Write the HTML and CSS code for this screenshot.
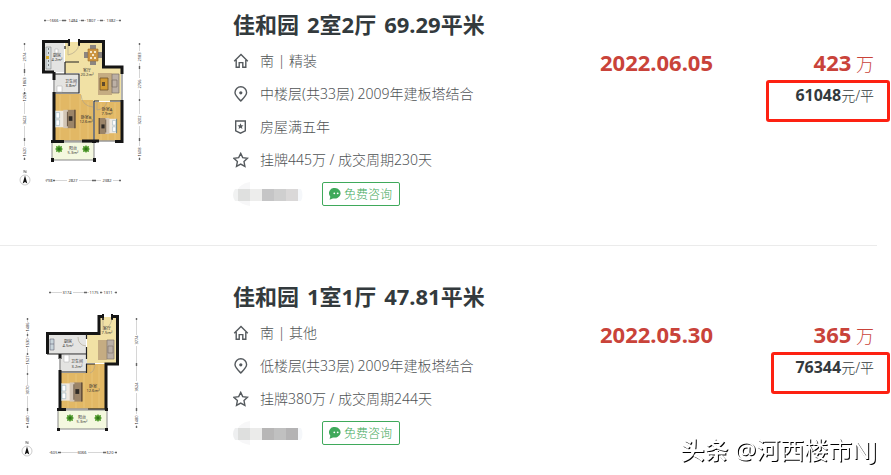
FILE: index.html
```
<!DOCTYPE html>
<html lang="zh-CN">
<head>
  <meta charset="UTF-8" />
  <meta name="viewport" content="width=device-width, initial-scale=1.0"/>
  <title>佳和园 成交</title>
  <link rel="stylesheet" href="styles.css">
</head>
<body>
  <!-- shared icons -->
  <svg class="defs" width="0" height="0" aria-hidden="true">
    <symbol id="house" viewBox="0 0 16 16">
      <path d="M1.200 8.200 8 1.600l6.800 6.600M3.200 7v7.300h3V9.600h3.600v4.700h3V7"/>
    </symbol>
    <symbol id="pin" viewBox="0 0 16 16">
      <path d="M7.800 15C4.500 11.800 2 9.600 2 6.600a5.800 5.800 0 0 1 11.600 0C13.600 9.600 11.100 11.800 7.800 15Z"/>
      <circle class="solid" cx="7.800" cy="6.800" r="1.600"/>
    </symbol>
    <symbol id="badge" viewBox="0 0 16 16">
      <path d="M2.700 2h9.600v9.800l-4.800 2.400-4.800-2.400Z"/>
      <path class="solid" d="m7.500 4.200.9 2 2.100.2-1.600 1.400.5 2.200-1.900-1.200-1.900 1.200.5-2.200-1.600-1.400 2.100-.2Z"/>
    </symbol>
    <symbol id="star" viewBox="0 0 16 16">
      <path d="m7.700 1.400 2 4.200 4.800.7-3.500 3.300.9 4.800-4.200-2.300-4.200 2.300.9-4.800L.9 6.300l4.800-.7Z"/>
    </symbol>
    <symbol id="chat" viewBox="0 0 12 12">
      <path d="M6 0a6 5.300 0 1 1-2 10.400L.6 11.800l.7-3.100A5.300 5.300 0 0 1 6 0Z" fill="#3fa95b"/>
      <circle cx="5.300" cy="5.300" r=".9" fill="#fff"/>
      <circle cx="8.700" cy="5.300" r=".9" fill="#fff"/>
    </symbol>
    <symbol id="compass" viewBox="0 0 12 18">
      <circle cx="6" cy="12" r="5" fill="#fff" stroke="#aaa" stroke-width=".6"/>
      <path d="m6 7.500 2.300 8L6 14l-2.300 1.500Z" fill="#111"/>
      <path d="M5 4.800V2.300l2 2.500V2.300" fill="none" stroke="#444" stroke-width=".6"/>
    </symbol>
    <symbol id="plant" viewBox="0 0 8 8">
      <path d="m4 0 1 1.400L7 1l-.3 2L8 4 6.700 5 7 7l-2-.4L4 8 3 6.600 1 7l.3-2L0 4l1.300-1L1 1l2 .4Z" fill="#4f9a2c"/>
      <circle cx="4" cy="4" r="1.500" fill="#2f7418"/>
    </symbol>
    <symbol id="bed" viewBox="0 0 24 20">
      <path d="M0 1h14v18H0Z" fill="#efeae2"/>
      <path d="M13 0h9v20h-9Z" fill="#9b8468"/>
      <path d="M9 0h5v20H9Z" fill="#d3c6b6"/>
      <path d="M13 2h1v16h-1ZM21 0h1.500v20H21Z" fill="#5f4b38"/>
      <path d="M15 7h4v5h-4Z" fill="#2f2a25"/>
      <path d="M1 3h4v6H1ZM1 11h4v6H1Z" fill="#fff" stroke="#9bb2bd" stroke-width=".7"/>
      <path d="M0 1v18" stroke="#4c7484"/>
    </symbol>
  </svg>

  <ul class="list">
    <li class="card">
      <svg class="plan" viewBox="0 10 160 180" role="img" aria-label="户型图">
        <!-- rooms -->
        <path fill="#f1e1a5" d="M65 42h38v26h18v33H80V73H65Z"/>
        <path fill="#e4e4e2" d="M45 43h19v29H45ZM55 74h23v19H55Z"/>
        <path fill="#e2b865" d="M54 94h27v6h12v41H54ZM95 102h26v39H95Z"/>
        <path fill="#f4f8df" stroke="#888" d="M52 142h42v18H52Z"/>
        <path stroke="#eed08a" stroke-width=".5" d="M60 95v45M70 95v45M80 95v45M88 102v38M101 103v38M108 103v38M115 103v38"/>
        <!-- walls -->
        <path class="wall" d="M69 41.500H43.500V72H54M78 41.500h25.500V67H122v7M122 100v41.500h-7M54 72v8M54 92v49.500h10M82 141h17"/>
        <path class="wall-ends" d="M68 39h2v7h-2ZM78 39h2v7h-2ZM51 140h4v3h-4ZM92 140h4v3h-4ZM51 158h3v4h-3ZM93 158h3v4h-3Z"/>
        <path class="thin-wall" d="M54 74h25v19H54M65 46v3M65 62h14M65 62v12M94 101v40M94 101h5M110 101h12"/>
        <path class="window" d="M54 80v12M122 74v26M64 141h18M99 141h16"/>
        <!-- furniture -->
        <path class="door" d="M68 43v12q9-2 11-10M81 95q1 11 12 12M97 102v8q8-1 10-8"/>
        <path fill="#d5dde0" stroke="#777" stroke-width=".5" d="M46 47h5v22h-5Z"/>
        <path stroke="#555" stroke-width=".7" stroke-dasharray="2 2" d="M48.500 48v20"/>
        <path fill="#d8ad32" d="M46 56h3v3h-3Z"/>
        <path fill="#fff" stroke="#aaa" stroke-width=".5" d="M57 86h5v6h-5ZM55 49h3v4h-3Z"/>
        <path fill="#8b8580" d="M90 45h6v4h-6ZM90 61h6v4h-6ZM84 52h4v6h-4ZM98 52h4v6h-4Z"/>
        <path fill="#cd9643" stroke="#9f6b26" stroke-width=".6" d="M88 49h10v12H88Z"/>
        <path fill="#f4e7c9" d="M90 51h2v2h-2ZM94 51h2v2h-2ZM90 57h2v2h-2ZM94 57h2v2h-2ZM92 54h2v2h-2Z"/>
        <path fill="#c5ac82" d="M98 73h14v22H98Z"/>
        <path fill="#d29b33" stroke="#6e532e" stroke-width=".8" d="M100 78h8v12h-8Z"/>
        <path fill="#5f4a2c" d="M102 82h3v4h-3Z"/>
        <path fill="#bcb0a5" stroke="#7d7065" stroke-width=".7" d="M112 74h7v19h-7ZM112 80h5v7h-5Z"/>
        <use href="#bed" x="55" y="109" width="22" height="20"/>
        <use href="#bed" x="95" y="118" width="24" height="16" transform="rotate(180 107 126)"/>
        <use href="#plant" x="55" y="145" width="8" height="8"/>
        <use href="#plant" x="82" y="145" width="8" height="8"/>
        <g class="room">
          <text x="57" y="57">厨房</text><text x="57" y="61">4.2m²</text>
          <text x="87" y="72">客厅</text><text x="87" y="76">20.2m²</text>
          <text x="71" y="83">卫生间</text><text x="71" y="87">3.8m²</text>
          <text x="86" y="119">卧室B</text><text x="86" y="123">12.6m²</text>
          <text x="107" y="111">卧室A</text><text x="107" y="115">7.9m²</text>
          <text x="73" y="150">阳台</text><text x="73" y="154">5.3m²</text>
        </g>
        <!-- measures -->
        <path class="measure" d="M45 20.500h5M59 20.500h8M79 20.500h7M97 20.500h8M116 20.500h5M45 180.500h2M53 180.500h14M79 180.500h22M113 180.500h8M24.500 43v8M24.500 63v13M24.500 88v3M24.500 102v12M24.500 126v20M24.500 157v3M139.500 43v8M139.500 63v15M139.500 90v24M139.500 126v20M139.500 157v3"/>
        <path class="tick" d="M44 20.500h2M62 20.500h4M81 20.500h3M100 20.500h3M119 20.500h2M53 180.500h2M92 180.500h4M119 180.500h2M24.500 43v2M24.500 69v4M24.500 92v2M24.500 138v3M24.500 158v2M139.500 43v2M139.500 66v3M139.500 99v2M139.500 138v3M139.500 158v2"/>
        <g class="size">
          <text x="54" y="22">1666</text><text x="73" y="22">1484</text><text x="91" y="22">1807</text><text x="111" y="22">1382</text>
          <text x="49" y="182">798</text><text x="73" y="182">2827</text><text x="107" y="182">2382</text>
          <text transform="translate(26 57) rotate(-90)">2174</text><text transform="translate(26 82) rotate(-90)">1863</text>
          <text transform="translate(26 97) rotate(-90)">1255</text><text transform="translate(26 120) rotate(-90)">3422</text>
          <text transform="translate(26 152) rotate(-90)">1620</text>
          <text transform="translate(141 57) rotate(-90)">2183</text><text transform="translate(141 84) rotate(-90)">2756</text>
          <text transform="translate(141 120) rotate(-90)">3202</text><text transform="translate(141 152) rotate(-90)">1608</text>
        </g>
        <use href="#compass" x="19" y="168" width="12" height="18"/>
      </svg>
      <div class="info">
        <h2 class="title"><a href="#"><span>佳和园</span><span>2室2厅</span><span>69.29平米</span></a></h2>
        <p class="row"><svg class="icon"><use href="#house"/></svg>南 | 精装</p>
        <p class="row"><svg class="icon"><use href="#pin"/></svg>中楼层(共33层) 2009年建板塔结合</p>
        <p class="row"><svg class="icon"><use href="#badge"/></svg>房屋满五年</p>
        <p class="row"><svg class="icon"><use href="#star"/></svg>挂牌445万 / 成交周期230天</p>
        <div class="agent">
          <svg class="mosaic" viewBox="0 0 70 24" aria-hidden="true">
            <path fill="#f7f7f8" d="M5 7C8 3 11 1 17 0v24C11 23 8 21 5 19Z"/>
            <path fill="#f1f2f2" d="M5 7v12H2q-4-6 0-12Z"/>
            <path fill="#dfe0df" d="M5 7h12v12H5Z"/>
            <path fill="#ededec" d="M17 7h12v12H17Z"/>
            <path fill="#c5c5c6" d="M29 7h12v12H29Z"/>
            <path fill="#cfcfcf" d="M41 7h12v12H41Z"/>
            <path fill="#dad8d8" d="M53 7h12v12H53Z"/>
            <path fill="#f5f7fa" d="M65 7h3q3 6 0 12h-3Z"/>
          </svg>
          <button class="consult" type="button"><svg class="chat"><use href="#chat"/></svg>免费咨询</button>
        </div>
      </div>
      <div class="deal">
        <div class="date">2022.06.05</div>
        <div class="price">
          <div class="total"><b>423</b> 万</div>
          <div class="unit"><b>61048</b>元/平<span class="mark mark-wide"></span></div>
        </div>
      </div>
    </li>

    <li class="card">
      <svg class="plan" viewBox="0 10 160 180" role="img" aria-label="户型图">
        <!-- rooms -->
        <path fill="#f1e1a5" d="M100 45h17v46H87V63h13Z"/>
        <path fill="#e4e4e2" d="M49 63h37v19H49ZM60 83h27v17H60Z"/>
        <path fill="#e2b865" d="M61 101h26v-9h19v45H61Z"/>
        <path fill="#f4f8df" stroke="#888" d="M58 138h49v19H58Z"/>
        <path stroke="#eed08a" stroke-width=".5" d="M68 102v34M76 102v34M84 102v34M92 93v43M99 93v43"/>
        <!-- walls -->
        <path class="wall" d="M103 44.500h-4v17H47.500V82M112 44.500h5.500V92H106v45.500M60 82v5M60 98v39.500h6"/>
        <path class="wall-ends" d="M102 42h2v6h-2ZM111 42h2v6h-2ZM57 136h4v3h-4ZM105 136h3v3h-3ZM57 156h3v3h-3ZM105 156h3v3h-3Z"/>
        <path class="thin-wall" d="M47 82h40M60 100h27M86.500 62v5M86.500 75v12M86.500 92v9M86 92h9"/>
        <path class="window" d="M60 86v12M66 137h22"/>
        <path class="thin-wall" d="M88 137h18"/>
        <!-- furniture -->
        <path class="door" d="M103 46v12q7-2 9-11M78 65q0 8 8 9M90 101q4-1 5-8"/>
        <path fill="#c8d4da" stroke="#667" stroke-width=".6" d="M50 67h4v11h-4ZM50 72h4"/>
        <path fill="#fff" stroke="#aaa" stroke-width=".5" d="M64 83h5v7h-5Z"/>
        <path fill="#c5ac82" d="M98 68h9v20h-9Z"/>
        <path fill="#b8aea6" stroke="#82766d" stroke-width=".7" d="M107 68h7v19h-7ZM108 74h5v7h-5Z"/>
        <use href="#bed" x="61" y="110" width="23" height="20"/>
        <use href="#plant" x="66" y="142" width="8" height="8"/>
        <use href="#plant" x="94" y="142" width="8" height="8"/>
        <g class="room">
          <text x="107" y="58">客厅</text><text x="107" y="62">7.5m²</text>
          <text x="68" y="71">厨房</text><text x="68" y="75">4.5m²</text>
          <text x="77" y="91">卫生间</text><text x="77" y="96">3.2m²</text>
          <text x="93" y="116">卧室</text><text x="93" y="120">12.6m²</text>
          <text x="82" y="147">阳台</text><text x="82" y="151">5.3m²</text>
        </g>
        <!-- measures -->
        <path class="measure" d="M49 20.500h13M73 20.500h16M100 20.500h3M114 20.500h3M49 180.500h2M58 180.500h20M88 180.500h17M114 180.500h3M27.500 46v4M27.500 60v6M27.500 76v6M27.500 93v20M27.500 124v18M27.500 153v3M136.500 46v17M136.500 74v35M136.500 121v21M136.500 153v3"/>
        <path class="tick" d="M49 20.500h2M84 20.500h3M100 20.500h2M115 20.500h2M58 180.500h3M103 180.500h3M115 180.500h2M27.500 46v2M27.500 62v2M27.500 81v2M27.500 101v2M27.500 136v3M27.500 154v2M136.500 46v2M136.500 91v3M136.500 136v3M136.500 154v2"/>
        <g class="size">
          <text x="67" y="22">3174</text><text x="94" y="22">1175</text><text x="108" y="22">1311</text>
          <text x="54" y="182">605</text><text x="82" y="182">3066</text><text x="110" y="182">620</text>
          <text transform="translate(29 55) rotate(-90)">1486</text><text transform="translate(29 71) rotate(-90)">1530</text>
          <text transform="translate(29 88) rotate(-90)">1527</text><text transform="translate(29 118) rotate(-90)">3070</text>
          <text transform="translate(29 148) rotate(-90)">1480</text>
          <text transform="translate(138 68) rotate(-90)">3774</text><text transform="translate(138 115) rotate(-90)">3524</text>
          <text transform="translate(138 148) rotate(-90)">1480</text>
        </g>
        <use href="#compass" x="21" y="167" width="12" height="18"/>
      </svg>
      <div class="info">
        <h2 class="title"><a href="#"><span>佳和园</span><span>1室1厅</span><span>47.81平米</span></a></h2>
        <p class="row"><svg class="icon"><use href="#house"/></svg>南 | 其他</p>
        <p class="row"><svg class="icon"><use href="#pin"/></svg>低楼层(共33层) 2009年建板塔结合</p>
        <p class="row"><svg class="icon"><use href="#star"/></svg>挂牌380万 / 成交周期244天</p>
        <div class="agent">
          <svg class="mosaic" viewBox="0 0 70 24" aria-hidden="true">
            <path fill="#f7f7f8" d="M5 7C8 3 11 1 17 0v24C11 23 8 21 5 19Z"/>
            <path fill="#eeeff0" d="M5 7v12H2q-4-6 0-12Z"/>
            <path fill="#dedfde" d="M5 7h12v12H5Z"/>
            <path fill="#ebebea" d="M17 7h12v12H17Z"/>
            <path fill="#b7b6b6" d="M29 7h12v12H29Z"/>
            <path fill="#c0c0c0" d="M41 7h12v12H41Z"/>
            <path fill="#b4b3b4" d="M53 7h12v12H53Z"/>
            <path fill="#f5f7fa" d="M65 7h3q3 6 0 12h-3Z"/>
          </svg>
          <button class="consult" type="button"><svg class="chat"><use href="#chat"/></svg>免费咨询</button>
        </div>
      </div>
      <div class="deal">
        <div class="date">2022.05.30</div>
        <div class="price">
          <div class="total"><b>365</b> 万</div>
          <div class="unit"><b>76344</b>元/平<span class="mark"></span></div>
        </div>
      </div>
    </li>
  </ul>

  <div class="watermark"><b>头条</b> @河西楼市NJ</div>
</body>
</html>
```
FILE: styles.css
```
* {
  box-sizing: border-box;
}
body {
  margin: 0;
  background: #fff;
  color: #4f5355;
  font-family: "Noto Sans", "Noto Sans CJK SC", sans-serif;
  font-size: 14px;
  font-weight: 300;
}
.defs {
  position: absolute;
}
.list {
  list-style: none;
  margin: 0;
  padding: 0 14px 0 0;
}
.card {
  display: flex;
  padding: 36px 3px 39px 0;
  border-bottom: 1px solid #ebebeb;
}
.card:first-child {
  padding-top: 10px;
}
.card:last-child {
  padding-bottom: 0;
  border-bottom: 0;
}
.plan {
  flex: none;
  width: 160px;
  height: 180px;
  margin-right: 73px;
}
.info {
  flex: 1;
  min-width: 0;
}
.title {
  margin: 0 0 6px;
  font-size: 22px;
  font-weight: 700;
  line-height: 28px;
}
.title a {
  display: flex;
  gap: 8px;
  color: #333a3d;
  text-decoration: none;
  white-space: nowrap;
}
.row {
  display: flex;
  align-items: center;
  gap: 11px;
  margin: 0;
  line-height: 33px;
}
.icon {
  width: 16px;
  height: 16px;
  fill: none;
  stroke: #555a5e;
  stroke-width: 1.4;
}
.icon,
.chat {
  flex: none;
}
.solid {
  fill: #555a5e;
  stroke: none;
}
.agent {
  display: flex;
  align-items: center;
  gap: 19px;
  margin-top: 6px;
}
.mosaic {
  width: 70px;
  height: 24px;
}
.consult {
  display: flex;
  align-items: center;
  gap: 3px;
  height: 24px;
  padding: 0 7px 0 6px;
  border: 1px solid #3fa95b;
  border-radius: 2px;
  background: #fff;
  color: #3fa95b;
  font-family: inherit;
  font-size: 12px;
  font-weight: inherit;
  cursor: pointer;
}
.chat {
  width: 12px;
  height: 12px;
}

/* date and price */
.deal {
  display: flex;
  justify-content: space-between;
  flex: none;
  width: 274px;
  padding-top: 37px;
  color: #c9433a;
  line-height: 30px;
}
.date,
.total b {
  font-size: 22px;
  font-weight: 700;
}
.price {
  text-align: right;
}
.total {
  font-size: 18px;
}
.unit {
  position: relative;
  margin-top: 1px;
  color: #333a3d;
}
.unit b {
  font-size: 16px;
  font-weight: 700;
}
.mark {
  position: absolute;
  top: 0;
  right: -16px;
  width: 119px;
  height: 42px;
  border: 3px solid #fd2112;
  border-radius: 3px;
}
.mark-wide {
  width: 124px;
}

/* floor plans */
.wall {
  fill: none;
  stroke: #151515;
  stroke-width: 3;
}
.wall-ends {
  fill: #151515;
}
.thin-wall {
  fill: none;
  stroke: #222;
  stroke-width: 1.2;
}
.window {
  stroke: #999;
  stroke-width: 1.5;
}
.door {
  fill: none;
  stroke: #aaa08a;
  stroke-width: 0.6;
}
.measure {
  stroke: #bbb;
  stroke-width: 0.6;
}
.tick {
  stroke: #666;
  stroke-width: 1.4;
}
.room,
.size {
  fill: #333;
  font-size: 4px;
  font-weight: 400;
  text-anchor: middle;
}

.watermark {
  position: fixed;
  right: 14px;
  bottom: 10px;
  color: #fff;
  font-size: 24px;
  font-weight: 400;
  line-height: 30px;
  text-shadow: 1px 1px 0 #000;
}
.watermark b {
  font-weight: 700;
}
```
